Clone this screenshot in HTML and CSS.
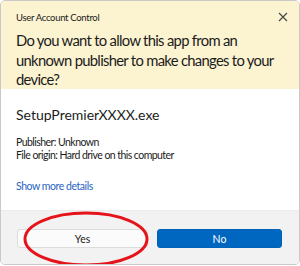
FILE: index.html
```html
<!DOCTYPE html>
<html lang="en">

<head>
   <meta charset="UTF-8" />
   <meta name="viewport" content="width=device-width, initial-scale=1.0" />
   <title>User Account Control</title>
   <link rel="stylesheet" href="styles.css">
</head>

<body>
   <div class="dialog">
      <div class="header">
         <div class="title-bar">
            <span class="title">User Account Control</span>
            <svg class="close" width="10" height="10" viewBox="0 0 10 10">
               <path d="M1 1 L9 9 M9 1 L1 9" stroke="#444" stroke-width="1.1" />
            </svg>
         </div>
         <h1>Do you want to allow this app from an unknown publisher to make changes to your device?</h1>
      </div>

      <div class="content">
         <p class="app-name">SetupPremierXXXX.exe</p>
         <p class="info">Publisher: Unknown<br>File origin: Hard drive on this computer</p>
         <a class="more" href="#">Show more details</a>
      </div>

      <div class="footer">
         <button class="btn">Yes</button>
         <button class="btn primary">No</button>
      </div>

      <svg class="mark" width="130" height="58" viewBox="0 0 130 58">
         <ellipse cx="65" cy="29" rx="61" ry="26" fill="none" stroke="#e5141b" stroke-width="3" />
      </svg>
   </div>
</body>

</html>
```

FILE: styles.css
```css
*,
*::before,
*::after {
   margin: 0;
   padding: 0;
   box-sizing: border-box;
}

body {
   font-family: Lato, "Open Sans", sans-serif;
   background: #fff;
   width: 300px;
   height: 266px;
   overflow: hidden;
}

.dialog {
   position: relative;
   width: 300px;
   height: 265px;
   border: 1px solid #c9c9c9;
   border-radius: 5px;
   overflow: hidden;
   display: flex;
   flex-direction: column;
   color: #1b1b1b;
}

.header {
   background: #fcf3d1;
   height: 88px;
   padding: 0 15px;
}

.title-bar {
   display: flex;
   justify-content: space-between;
   align-items: center;
   height: 30px;
   padding-top: 2px;
}

.title {
   font-size: 9.5px;
   letter-spacing: -0.3px;
}

.close {
   margin-right: -4px;
}

h1 {
   font-weight: 400;
   font-size: 14.8px;
   line-height: 19.5px;
   letter-spacing: -0.7px;
   word-spacing: 0;
   margin-top: 0;
}

.content {
   flex: 1;
   background: #fff;
   padding: 17px 15px 0;
}

.app-name {
   font-size: 14px;
   line-height: 18px;
}

.info {
   font-size: 10.5px;
   line-height: 12.5px;
   letter-spacing: -0.55px;
   margin-top: 12px;
}

.more {
   display: block;
   font-size: 10.5px;
   letter-spacing: -0.45px;
   color: #2a63c2;
   text-decoration: none;
   margin-top: 19px;
}

.footer {
   background: #f2f2f2;
   height: 54px;
   display: grid;
   grid-template-columns: 131px 125px;
   gap: 9px;
   padding: 18px 0 0 16px;
   border-top: 1px solid #ececec;
}

.btn {
   height: 19px;
   font-family: inherit;
   font-size: 10.5px;
   border: 1px solid #dcdcdc;
   border-radius: 3px;
   background: #fbfbfb;
   color: #1b1b1b;
}

.btn.primary {
   background: #0067c0;
   border-color: #0063b8;
   color: #fff;
}

.mark {
   position: absolute;
   left: 20px;
   top: 209px;
}
```
